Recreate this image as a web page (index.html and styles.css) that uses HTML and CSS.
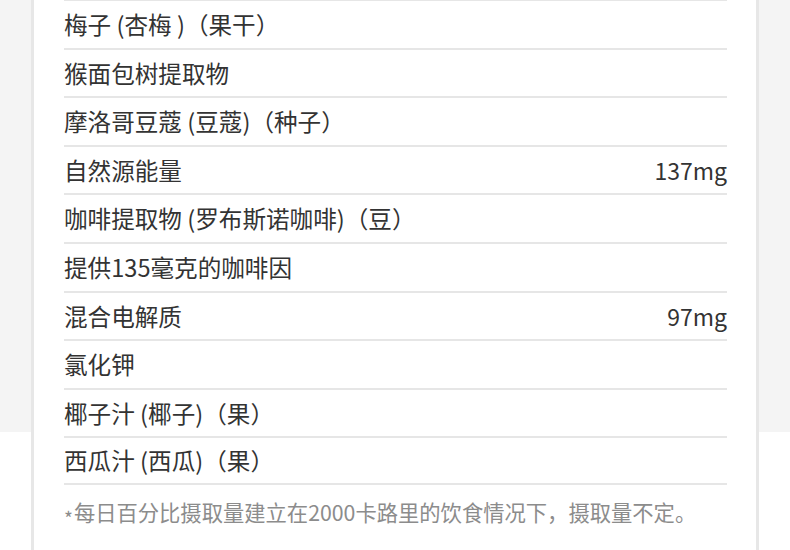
FILE: index.html
```html
<!DOCTYPE html>
<html lang="zh-CN">
<head>
<meta charset="utf-8">
<title>营养成分</title>
<link rel="stylesheet" href="styles.css">
</head>
<body>
<div class="card">
  <ul class="facts">
    <li class="row"><span class="name">梅子 (杏梅 )（果干）</span></li>
    <li class="row"><span class="name">猴面包树提取物</span></li>
    <li class="row"><span class="name">摩洛哥豆蔻 (豆蔻)（种子）</span></li>
    <li class="row"><span class="name">自然源能量</span><span class="value">137mg</span></li>
    <li class="row"><span class="name">咖啡提取物 (罗布斯诺咖啡)（豆）</span></li>
    <li class="row"><span class="name">提供135毫克的咖啡因</span></li>
    <li class="row"><span class="name">混合电解质</span><span class="value">97mg</span></li>
    <li class="row"><span class="name">氯化钾</span></li>
    <li class="row"><span class="name">椰子汁 (椰子)（果）</span></li>
    <li class="row last"><span class="name">西瓜汁 (西瓜)（果）</span></li>
  </ul>
  <p class="note"><span class="star">*</span>每日百分比摄取量建立在2000卡路里的饮食情况下，摄取量不定。</p>
</div>
</body>
</html>
```

FILE: styles.css
```css
* { box-sizing: border-box; }
html, body {
  margin: 0;
  padding: 0;
}
body {
  width: 790px;
  height: 550px;
  overflow: hidden;
  background: linear-gradient(#f4f4f4 0, #f4f4f4 432px, #ffffff 432px);
  font-family: "Noto Sans CJK SC", "Noto Sans", sans-serif;
  color: #333333;
}
.card {
  margin: -1px 0 0 31px;
  width: 728px;
  height: 560px;
  background: #ffffff;
  border-left: 3px solid #e7e7e7;
  border-right: 3px solid #e7e7e7;
  padding: 0 29px 0 30px;
}
.facts {
  list-style: none;
  margin: 0;
  padding: 0;
}
.row {
  display: flex;
  justify-content: space-between;
  align-items: center;
  height: 48.6px;
  border-top: 2px solid #e6e6e6;
  font-size: 23.6px;
  line-height: 1;
  padding-top: 1px;
}
.row.last {
  border-bottom: 2px solid #e6e6e6;
}
.value {
  font-size: 23px;
}
.note {
  margin: 0;
  padding-top: 13px;
  font-size: 21.3px;
  line-height: 28px;
  color: #8c8c8c;
}
.star {
  font-size: 19px;
  vertical-align: -5px;
  margin-right: 1px;
}
```
